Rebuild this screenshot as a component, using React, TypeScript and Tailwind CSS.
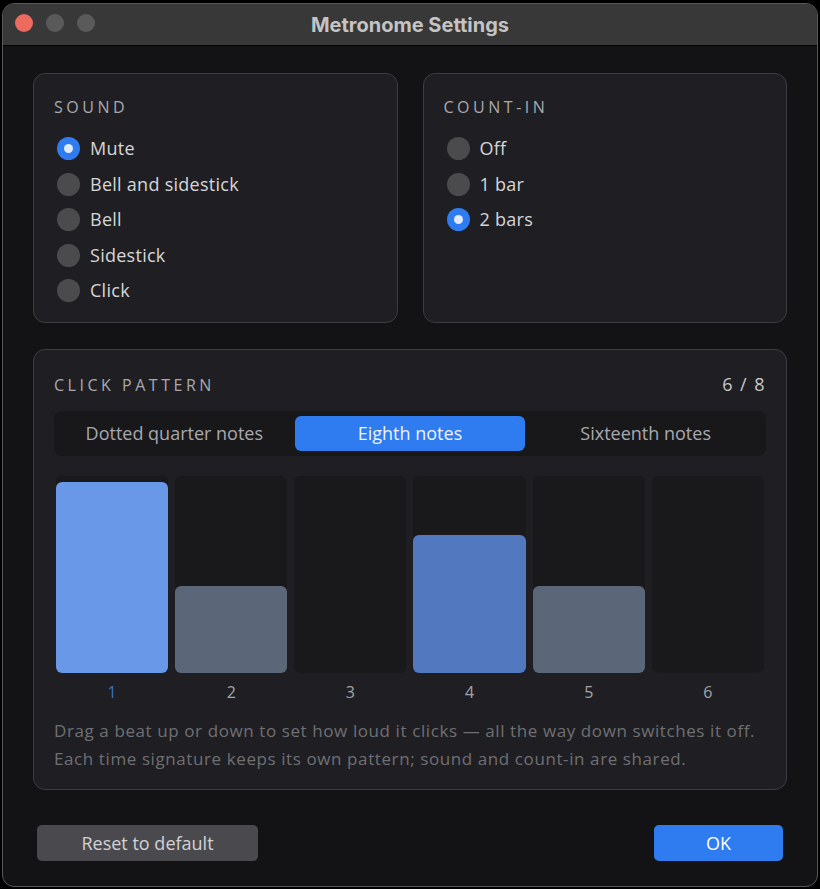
import { useState } from "react";

type Beat = { level: number; tone: string };

const sounds = ["Mute", "Bell and sidestick", "Bell", "Sidestick", "Click"];
const countIns = ["Off", "1 bar", "2 bars"];
const subdivisions = ["Dotted quarter notes", "Eighth notes", "Sixteenth notes"];

const beats: Beat[] = [
  { level: 97, tone: "bg-[#6a98e8]" },
  { level: 44, tone: "bg-[#5b6778]" },
  { level: 0, tone: "bg-[#5b6778]" },
  { level: 70, tone: "bg-[#5279bf]" },
  { level: 44, tone: "bg-[#5b6778]" },
  { level: 0, tone: "bg-[#5b6778]" },
];

function Radio({ label, checked, onSelect }: { label: string; checked: boolean; onSelect: () => void }) {
  return (
    <button onClick={onSelect} className="flex h-[35.5px] items-center gap-[10px] pl-[3px] text-left">
      {checked ? (
        <span className="flex h-[23px] w-[23px] items-center justify-center rounded-full bg-[#2f7bf0]">
          <span className="h-[9px] w-[9px] rounded-full bg-[#dfe9ff]" />
        </span>
      ) : (
        <span className="h-[23px] w-[23px] rounded-full bg-[#4b4b4d]" />
      )}
      <span className="text-[18px] tracking-[0.015em] text-[#d6d6d8]">{label}</span>
    </button>
  );
}

function Heading({ children }: { children: React.ReactNode }) {
  return <h2 className="text-[16px] uppercase tracking-[0.22em] text-[#a9a9ad]">{children}</h2>;
}

function OptionCard({
  title,
  options,
  value,
  onChange,
}: {
  title: string;
  options: string[];
  value: number;
  onChange: (i: number) => void;
}) {
  return (
    <section className="h-[250px] rounded-[12px] border border-[#3d3d41] bg-[#1f1f23] px-[20px] pt-[21px]">
      <Heading>{title}</Heading>
      <div className="mt-[12px] flex flex-col">
        {options.map((o, i) => (
          <Radio key={o} label={o} checked={value === i} onSelect={() => onChange(i)} />
        ))}
      </div>
    </section>
  );
}

export default function App() {
  const [sound, setSound] = useState(0);
  const [countIn, setCountIn] = useState(2);
  const [sub, setSub] = useState(1);

  return (
    <div className="h-[889px] w-[820px] bg-black px-[2px] pb-[2px] pt-[3px] font-['Open_Sans','Lato',sans-serif]">
      <div className="flex h-full flex-col overflow-hidden rounded-[12px] border border-[#58585a] bg-[#131315]">
        {/* title bar */}
        <div className="relative flex h-[42px] shrink-0 items-center justify-center border-b border-black bg-[#383838]">
          <div className="absolute left-[12px] top-[10px] flex gap-[13px]">
            <span className="h-[18px] w-[18px] rounded-full bg-[#ec6a5e]" />
            <span className="h-[18px] w-[18px] rounded-full bg-[#5a5a5a]" />
            <span className="h-[18px] w-[18px] rounded-full bg-[#5a5a5a]" />
          </div>
          <h1 className="font-['Inter',sans-serif] text-[20px] font-bold text-[#c4c4c4]">Metronome Settings</h1>
        </div>

        <div className="flex flex-1 flex-col px-[30px] pt-[27px]">
          <div className="grid grid-cols-2 gap-[25px]">
            <OptionCard title="Sound" options={sounds} value={sound} onChange={setSound} />
            <OptionCard title="Count-in" options={countIns} value={countIn} onChange={setCountIn} />
          </div>

          {/* click pattern */}
          <section className="mt-[26px] rounded-[12px] border border-[#3d3d41] bg-[#1f1f23] px-[20px] pb-[16px] pt-[21px]">
            <div className="flex items-center justify-between">
              <Heading>Click pattern</Heading>
              <span className="text-[18px] tracking-[0.08em] text-[#c8c8cc]">6 / 8</span>
            </div>

            <div className="mt-[13px] grid h-[45px] grid-cols-3 gap-[5px] rounded-[8px] bg-[#18181b] p-[5px]">
              {subdivisions.map((s, i) => (
                <button
                  key={s}
                  onClick={() => setSub(i)}
                  className={
                    sub === i
                      ? "rounded-[6px] bg-[#2f7bf0] text-[18px] text-[#eef3ff]"
                      : "rounded-[6px] text-[18px] text-[#a8a8ac]"
                  }
                >
                  {s}
                </button>
              ))}
            </div>

            <div className="mt-[20px] grid grid-cols-6 gap-[7px] px-[2px]">
              {beats.map((b, i) => (
                <div key={i} className="flex flex-col items-center">
                  <div className="flex h-[197px] w-full flex-col justify-end overflow-hidden rounded-[6px] bg-[#19191c]">
                    {b.level > 0 && <div className={`w-full rounded-t-[6px] ${b.tone}`} style={{ height: `${b.level}%` }} />}
                  </div>
                  <span className={i === 0 ? "mt-[7px] text-[16px] text-[#3b6fc4]" : "mt-[7px] text-[16px] text-[#a4a4a8]"}>
                    {i + 1}
                  </span>
                </div>
              ))}
            </div>

            <p className="mt-[13px] text-[17px] leading-[28px] tracking-[0.035em] text-[#6f6f73]">
              Drag a beat up or down to set how loud it clicks — all the way down switches it off.
              <br />
              Each time signature keeps its own pattern; sound and count-in are shared.
            </p>
          </section>

          <div className="mt-auto mb-[25px] flex items-center justify-between px-[4px]">
            <button className="h-[36px] w-[221px] rounded-[5px] bg-[#4a4a4e] text-[18px] text-[#d2d2d4]">Reset to default</button>
            <button className="h-[36px] w-[129px] rounded-[5px] bg-[#2f7bf0] text-[18px] text-white">OK</button>
          </div>
        </div>
      </div>
    </div>
  );
}
